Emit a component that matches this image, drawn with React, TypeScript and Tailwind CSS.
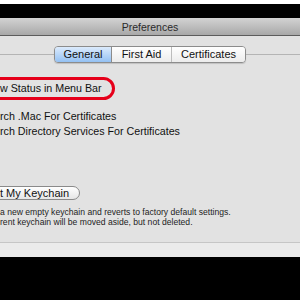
export default function App() {
  const font = { fontFamily: '"Liberation Sans", Arial, sans-serif' };
  return (
    <div className="w-[300px] h-[300px] overflow-hidden flex flex-col bg-black text-[#111111]" style={font}>
      <div className="h-[4px] bg-white" />
      <div className="h-[14px] bg-black" />

      {/* title bar */}
      <div className="h-[18px] pt-[2px] flex items-center justify-center bg-gradient-to-b from-[#d3d3d3] to-[#a8a8a8] border-b border-[#5c5c5c] text-[10.5px] text-[#2a2a2a]">
        Preferences
      </div>

      {/* content */}
      <div className="h-[206px] bg-[#e2e2e2] flex flex-col overflow-hidden">
        <div className="mt-[10px] h-[17px] flex items-center">
          <div className="flex-1 h-px bg-[#b4b4b4]" />
          <div className="flex h-[17px] rounded-[4px] border border-[#8c8c8c] overflow-hidden text-[11px] shadow-[0_1px_1px_rgba(0,0,0,0.15)]">
            <div className="w-[57px] flex items-center justify-center bg-gradient-to-b from-[#dcebfc] to-[#94c1f3] border-r border-[#8c8c8c]">General</div>
            <div className="w-[60px] flex items-center justify-center bg-gradient-to-b from-[#ffffff] to-[#ececec] border-r border-[#bcbcbc]">First Aid</div>
            <div className="w-[73px] flex items-center justify-center bg-gradient-to-b from-[#ffffff] to-[#ececec]">Certificates</div>
          </div>
          <div className="flex-1 h-px bg-[#b4b4b4]" />
        </div>

        <div className="mt-[14px] -ml-4 w-[131px] h-[23px] rounded-[12px] border-[3px] border-[#e6001a] flex items-center pl-[13px] text-[10.7px]">
          w Status in Menu Bar
        </div>

        <div className="mt-[9px] flex flex-col text-[10.7px] leading-[15px]">
          <div>rch .Mac For Certificates</div>
          <div>rch Directory Services For Certificates</div>
        </div>

        <div className="mt-[47px] -ml-4 w-[96px] h-[14px] rounded-full border border-[#8a8a8a] bg-gradient-to-b from-white to-[#e6e6e6] flex items-center pl-[15px] text-[11px]">
          t My Keychain
        </div>

        <div className="mt-[7px] flex flex-col text-[8.6px] leading-[10px] text-[#222222]">
          <div>a new empty keychain and reverts to factory default settings.</div>
          <div>rent keychain will be moved aside, but not deleted.</div>
        </div>
      </div>

      <div className="h-[15px] bg-[#ebebeb] border-t border-[#c6c6c6]" />
      <div className="flex-1 bg-black" />
    </div>
  );
}
